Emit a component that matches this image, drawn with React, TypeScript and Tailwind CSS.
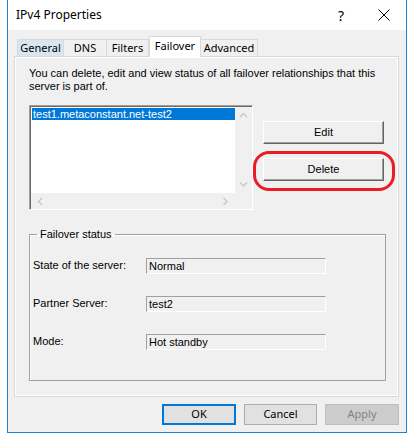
import React from "react";

const body = { fontFamily: '"Liberation Sans", Arial, sans-serif' };
const ui = { fontFamily: '"Noto Sans", "Liberation Sans", sans-serif' };

function Chevron({ dir }: { dir: "up" | "down" | "left" | "right" }) {
  const d =
    dir === "up"
      ? "M1 5 L4.5 1.5 L8 5"
      : dir === "down"
      ? "M1 1.5 L4.5 5 L8 1.5"
      : dir === "left"
      ? "M5 1 L1.5 4.5 L5 8"
      : "M1.5 1 L5 4.5 L1.5 8";
  const w = dir === "up" || dir === "down" ? 9 : 7;
  const h = dir === "up" || dir === "down" ? 7 : 9;
  return (
    <svg width={w} height={h} viewBox={`0 0 ${w} ${h}`}>
      <path d={d} fill="none" stroke="#c4c4c4" strokeWidth="1.2" />
    </svg>
  );
}

function Field({ label, value }: { label: string; value: string }) {
  return (
    <div className="flex items-center h-[16px]">
      <div className="w-[113px] text-[11px] text-black">{label}</div>
      <div className="w-[180px] h-[16px] border-t border-l border-[#a0a0a0] border-b-white border-r-white border-b border-r bg-[#f0f0f0] text-[11px] leading-[14px] pl-[2px] text-black">
        {value}
      </div>
    </div>
  );
}

function ClassicButton({ children }: { children: React.ReactNode }) {
  return (
    <div className="w-[121px] h-[23px] border border-t-white border-l-white border-b-[#646464] border-r-[#646464] bg-[#f0f0f0] shadow-[inset_-1px_-1px_0_#a0a0a0] flex items-center justify-center text-[11px] text-black">
      {children}
    </div>
  );
}

export default function App() {
  return (
    <div className="w-[415px] h-[435px] bg-white" style={body}>
      <div className="ml-[7px] w-[400px] h-[433px] border-l border-r border-b border-[#1883d7] flex flex-col">
        {/* title bar */}
        <div className="h-[30px] bg-white flex items-center pl-[8px]" style={ui}>
          <span className="text-[12px] text-black">IPv4 Properties</span>
          <span className="ml-auto text-[14px] text-black mr-[34px]">?</span>
          <svg width="12" height="12" viewBox="0 0 12 12" className="mr-[16px]">
            <path d="M0.5 0.5 L11.5 11.5 M11.5 0.5 L0.5 11.5" stroke="#000" strokeWidth="1" />
          </svg>
        </div>
        {/* client */}
        <div className="flex-1 bg-[#f0f0f0] flex flex-col pl-[6px] pr-[7px]">
          {/* tabs */}
          <div className="flex items-end h-[26px] pl-[3px] relative z-10" style={ui}>
            <div className="h-[17px] w-[47px] border border-b-0 border-[#d9d9d9] bg-[#d8e6f2] text-[11px] flex items-center justify-center text-black">General</div>
            <div className="h-[17px] w-[43px] border border-b-0 border-l-0 border-[#d9d9d9] bg-[#f0f0f0] text-[11px] flex items-center justify-center text-black">DNS</div>
            <div className="h-[17px] w-[42px] border border-b-0 border-l-0 border-[#d9d9d9] bg-[#f0f0f0] text-[11px] flex items-center justify-center text-black">Filters</div>
            <div className="h-[21px] w-[52px] -mb-px border border-b-0 border-[#d9d9d9] bg-white text-[11px] flex items-center justify-center text-black pb-[2px]">Failover</div>
            <div className="h-[17px] w-[57px] border border-b-0 border-l-0 border-[#d9d9d9] bg-[#f0f0f0] text-[11px] flex items-center justify-center text-black">Advanced</div>
          </div>
          {/* panel */}
          <div className="h-[341px] border border-[#d9d9d9] shadow-[inset_1px_1px_0_#ffffff,inset_-1px_-1px_0_#ffffff] bg-[#f0f0f0] pl-[14px] pt-[10px] flex flex-col">
            <p className="text-[11px] leading-[13px] text-black w-[365px]">
              You can delete, edit and view status of all failover relationships that this server is part of.
            </p>
            <div className="flex mt-[12px]">
              {/* list */}
              <div className="w-[224px] h-[105px] border border-t-[#a0a0a0] border-l-[#a0a0a0] border-b-white border-r-white shadow-[inset_1px_1px_0_#696969] bg-white flex flex-col pl-px pt-px">
                <div className="flex flex-1">
                  <div className="flex-1 pt-[1px] pl-[1px]">
                    <div className="h-[12px] bg-[#0078d7] text-white text-[11px] leading-[12px] pl-px">test1.metaconstant.net-test2</div>
                  </div>
                  <div className="w-[17px] bg-[#f0f0f0] flex flex-col items-center justify-between py-[5px]">
                    <Chevron dir="up" />
                    <Chevron dir="down" />
                  </div>
                </div>
                <div className="h-[16px] flex">
                  <div className="flex-1 bg-[#f0f0f0] flex items-center justify-between px-[6px]">
                    <Chevron dir="left" />
                    <Chevron dir="right" />
                  </div>
                  <div className="w-[17px] bg-[#f0f0f0]" />
                </div>
              </div>
              {/* buttons */}
              <div className="ml-[10px] mt-[16px] flex flex-col gap-[14px]">
                <ClassicButton>Edit</ClassicButton>
                <div className="relative">
                  <ClassicButton>Delete</ClassicButton>
                  <div className="absolute -left-[10px] -top-[7px] w-[142px] h-[40px] border-[3px] border-[#ea1c24] rounded-[16px]" />
                </div>
              </div>
            </div>
            {/* group box */}
            <fieldset className="mt-[16px] w-[357px] h-[155px] border border-[#a0a0a0] shadow-[inset_1px_1px_0_#ffffff] pl-[3px] pr-0 pt-[15px] m-0 flex flex-col gap-[22px]">
              <legend className="text-[11px] text-black px-[3px] ml-[4px]">Failover status</legend>
              <Field label="State of the server:" value="Normal" />
              <Field label="Partner Server:" value="test2" />
              <Field label="Mode:" value="Hot standby" />
            </fieldset>
          </div>
          {/* bottom buttons */}
          <div className="flex justify-end gap-[8px] mt-[7px]" style={ui}>
            <div className="w-[74px] h-[21px] border-2 border-[#0078d7] bg-[#e1e1e1] flex items-center justify-center text-[11px] text-black">OK</div>
            <div className="w-[73px] h-[21px] border border-[#adadad] bg-[#e1e1e1] flex items-center justify-center text-[11px] text-black">Cancel</div>
            <div className="w-[74px] h-[21px] border border-[#bfbfbf] bg-[#cccccc] flex items-center justify-center text-[11px] text-[#838383]">Apply</div>
          </div>
        </div>
      </div>
    </div>
  );
}
